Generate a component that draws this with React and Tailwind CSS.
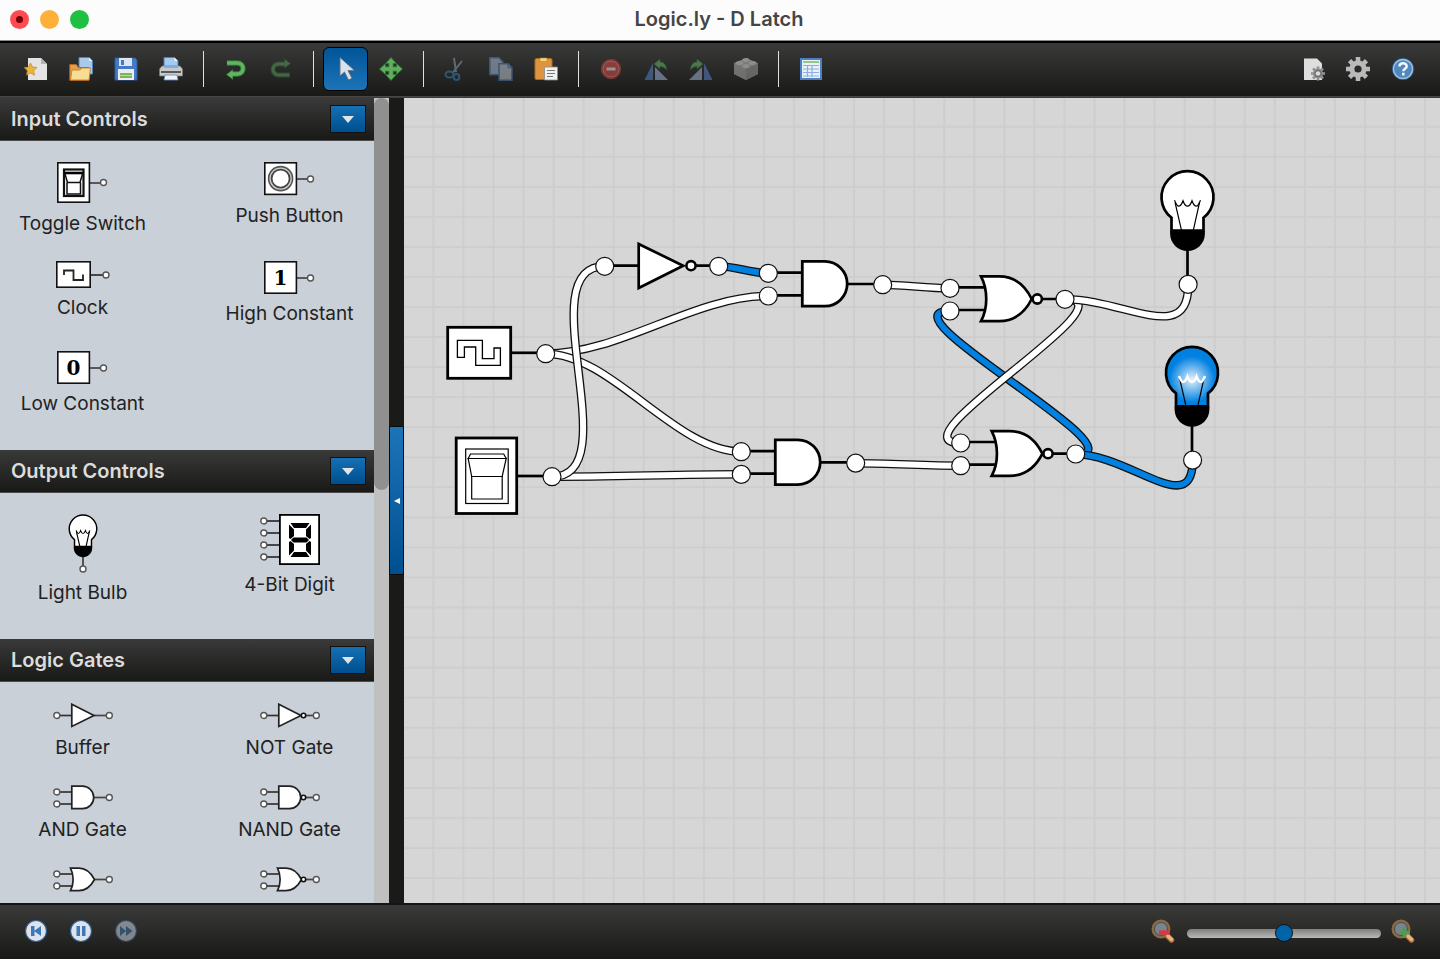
import React, { useState } from "react";

/* ---------- toolbar icons (24x24) ---------- */

function Icon({ children }) {
  return (
    <svg width="24" height="24" viewBox="0 0 24 24" fill="none" aria-hidden="true">
      {children}
    </svg>
  );
}

const NewIcon = () => (
  <Icon>
    <path d="M4 1h13l6 6v16H4z" fill="#e4e4e4" />
    <path d="M17 1v6h6z" fill="#b5b5b5" />
    <path d="M6.500 6l2 4 4.500.5-3.300 3.200.9 4.500-4.100-2.200-4.100 2.200.9-4.500L0 10.500l4.500-.5z" fill="#ecb53c" stroke="#b07a1c" strokeWidth=".6" />
  </Icon>
);

const OpenIcon = () => (
  <Icon>
    <path d="M10 .5h10l3.500 3.500v13H10z" fill="#a9c8ea" stroke="#4f83c0" />
    <path d="M20 .5V4h3.500z" fill="#e6f0fb" />
    <path d="M.8 7.500h6.500l2 3H20v12.800H.8z" fill="#dfa04a" stroke="#b5651d" />
    <path d="M3 13h8l2-2h8.500L20 23H1.500z" fill="#f7dc94" stroke="#c47a2a" strokeWidth=".8" />
  </Icon>
);

const SaveIcon = () => (
  <Icon>
    <path d="M1 1h20l2 2v20H1z" fill="#4579c4" stroke="#2d5ca6" />
    <path d="M5 1h13v8H5z" fill="#dbe5f3" />
    <path d="M7 3h3v5H7z" fill="#4579c4" />
    <path d="M4 12h16v11H4z" fill="#e9eef5" />
    <path d="M6 16h12v5H6z" fill="#7fb35b" />
    <path d="M6 18.500h12" stroke="#b7d99d" />
  </Icon>
);

const PrintIcon = () => (
  <Icon>
    <path d="M5 .5h10.500L19 4v8H5z" fill="#a6cbf0" stroke="#4b7fb8" />
    <path d="M15.500.5V4H19z" fill="#e9f3fd" />
    <path d="M3 9h18l2.500 3v7h-23v-7z" fill="#c9c9c9" stroke="#777" strokeWidth=".7" />
    <path d="M5 8h14v3H5z" fill="#7eaee0" />
    <path d="M2 15h20" stroke="#5a5a5a" strokeWidth="2" />
    <path d="M6 18h12l1 5H5z" fill="#eaf2fb" stroke="#5a8cc4" strokeWidth=".8" />
  </Icon>
);

const UndoIcon = () => (
  <Icon>
    <path d="M3 6h10.500a5.500 5.500 0 010 11H7" stroke="#2f7a38" strokeWidth="5.500" />
    <path d="M9 12v11l-7-5.500z" fill="#2f7a38" />
    <path d="M3 6h10.500a5.500 5.500 0 010 11H7" stroke="#62b463" strokeWidth="3.600" />
    <path d="M8.500 13.500v8L3 17.500z" fill="#62b463" />
  </Icon>
);

const RedoIcon = () => (
  <Icon>
    <path d="M21 18H9.500a5.500 5.500 0 010-11H16" stroke="#2f6a38" strokeWidth="5" />
    <path d="M15 1v11l7-5.500z" fill="#2f6a38" />
    <path d="M20 18H9.500a5.500 5.500 0 010-11H16" stroke="#5fa563" strokeWidth="3" />
    <path d="M16 3v7.500L21 6.500z" fill="#5fa563" />
  </Icon>
);

const PointerIcon = () => (
  <Icon>
    <path d="M6 .5v18.500l4.500-4 4 8 3.500-1.700-4-7.800h6.500z" fill="#d9e2ea" stroke="#5c7084" strokeWidth=".9" />
  </Icon>
);

const MoveIcon = () => (
  <Icon>
    <path
      d="M12 .5l5.500 6h-3.300v3.300h3.300V6.500l6 5.500-6 5.500v-3.300h-3.300v3.300h3.300L12 23.500l-5.500-6h3.300v-3.300H6.500v3.300L.5 12l6-5.500v3.300h3.300V6.500H6.500z"
      fill="#5fae5c"
      stroke="#2c7434"
      strokeWidth=".9"
    />
  </Icon>
);

const CutIcon = () => (
  <Icon>
    <path d="M10 1l2 14M18 4L8.500 16" stroke="#8fa9bd" strokeWidth="2" />
    <ellipse cx="5.500" cy="17.500" rx="4" ry="3" stroke="#2e8ac4" strokeWidth="2" />
    <ellipse cx="12.500" cy="20" rx="2.800" ry="3" stroke="#2e8ac4" strokeWidth="2" />
  </Icon>
);

const CopyIcon = () => (
  <Icon>
    <path d="M.8.8h9l4 4v13H.8z" fill="#b3c8de" stroke="#4a80c0" strokeWidth="1.500" />
    <path d="M10 6.800h9l4 4v12.500H10z" fill="#c8d4e0" stroke="#4a80c0" strokeWidth="1.500" />
    <path d="M19 6.800v4h4" stroke="#4a80c0" />
  </Icon>
);

const PasteIcon = () => (
  <Icon>
    <rect x="1" y="1.500" width="17" height="21" rx="1.500" fill="#dd9440" stroke="#b36a1e" />
    <path d="M6 1h7v3.500H6z" fill="#f5d57a" stroke="#b38a30" strokeWidth=".6" />
    <path d="M10.500 10H23.500v13h-13z" fill="#f1f1f1" stroke="#8c8c8c" strokeWidth=".8" />
    <path d="M13 13.500h8M13 16.500h8M13 19.500h6" stroke="#777" />
  </Icon>
);

const RemoveIcon = () => (
  <Icon>
    <circle cx="12" cy="12" r="9.500" fill="#e8504c" stroke="#c23c38" strokeWidth="1.500" />
    <circle cx="12" cy="12" r="8" stroke="#f09a97" />
    <path d="M7.500 12h9" stroke="#fff" strokeWidth="3" />
  </Icon>
);

const RotateLeftIcon = () => (
  <Icon>
    <path d="M9 6v17H.5z" fill="#5a8ad0" />
    <path d="M11 10v13h13z" fill="#a5bee5" />
    <path d="M10 7l6-5v3c4 0 6.500 3 6.500 8-2-3-4-3.500-6.500-3.500V12z" fill="#6fbe6c" stroke="#2c8434" strokeWidth=".6" />
  </Icon>
);

const RotateRightIcon = () => (
  <Icon>
    <path d="M15 6v17h8.500z" fill="#5a8ad0" />
    <path d="M13 10v13H0z" fill="#a5bee5" />
    <path d="M14 7L8 2v3c-4 0-6.500 3-6.500 8 2-3 4-3.500 6.500-3.500V12z" fill="#6fbe6c" stroke="#2c8434" strokeWidth=".6" />
  </Icon>
);

const BlockIcon = () => (
  <Icon>
    <path d="M0 6l12-5 12 5v11l-12 6-12-6z" fill="#c8c8c8" />
    <path d="M12 12l12-6v11l-12 6z" fill="#a6a6a6" />
    <path d="M0 6l12 6v11L0 17z" fill="#bababa" />
    <ellipse cx="12" cy="3" rx="3.500" ry="2" fill="#eee" />
    <ellipse cx="5.500" cy="6" rx="3.500" ry="2" fill="#eee" />
    <ellipse cx="18.500" cy="6" rx="3.500" ry="2" fill="#eee" />
    <ellipse cx="12" cy="9" rx="3.500" ry="2" fill="#eee" />
  </Icon>
);

const TableIcon = () => (
  <Icon>
    <rect x="2" y="2" width="20" height="20" fill="#e8f0fa" stroke="#4a80c4" strokeWidth="2" />
    <path d="M4 5h16" stroke="#85bb62" strokeWidth="1.600" />
    <path d="M4 8.500h16M4 12h16M4 15.500h16M4 19h16M8.500 8v12M13 8v12" stroke="#8db1de" strokeWidth="1.200" />
  </Icon>
);

function GearShape({ cx, cy, r, fill, hole }) {
  const teeth = [0, 45, 90, 135];
  return (
    <g transform={`translate(${cx} ${cy})`}>
      {teeth.map((a) => (
        <rect key={a} x={-r * 0.19} y={-r} width={r * 0.38} height={r * 2} fill={fill} transform={`rotate(${a})`} />
      ))}
      <circle r={r * 0.72} fill={fill} />
      <circle r={r * 0.3} fill={hole} />
    </g>
  );
}

const PageGearIcon = () => (
  <Icon>
    <path d="M3 1.500h13l5 5V23H3z" fill="#dedede" />
    <GearShape cx={17} cy={16.500} r={7} fill="#929292" hole="#ddd" />
    <circle cx="17" cy="16.500" r="3.300" stroke="#666" />
  </Icon>
);

const GearIcon = () => (
  <Icon>
    <GearShape cx={12} cy={12} r={12} fill="#b9b9b9" hole="#292929" />
  </Icon>
);

const HelpIcon = () => (
  <Icon>
    <circle cx="12" cy="12" r="9.700" fill="#4f87bf" stroke="#9fc0e0" strokeWidth="1.700" />
    <circle cx="12" cy="12" r="10.800" stroke="#2a5f96" strokeWidth=".7" />
    <path d="M8.500 9.500c0-4.300 7.200-4.200 7.200-.3 0 2.600-3.400 2.600-3.400 5M12.300 15.800v2.600" stroke="#f3f7fb" strokeWidth="2.500" />
  </Icon>
);

function PlayerIcon({ children }) {
  return (
    <Icon>
      <circle cx="12" cy="12" r="10.500" fill="#dce3ea" stroke="#30608f" strokeWidth="1.200" />
      {children}
    </Icon>
  );
}

const RestartIcon = () => (
  <PlayerIcon>
    <path d="M7 7h3.500v10H7zM17 7v10l-7-5z" fill="#3d78b8" />
  </PlayerIcon>
);

const PauseIcon = () => (
  <PlayerIcon>
    <path d="M7.500 7h3.500v10H7.500zM13 7h3.500v10H13z" fill="#3d78b8" />
  </PlayerIcon>
);

const ForwardIcon = () => (
  <PlayerIcon>
    <path d="M6 7l6 5-6 5zM12 7l6.500 5-6.500 5z" fill="#3d78b8" />
  </PlayerIcon>
);

function MagnifierIcon({ children }) {
  return (
    <Icon>
      <circle cx="10" cy="10" r="8.500" fill="#697078" stroke="#8f6a3a" strokeWidth="2" />
      <circle cx="10" cy="10" r="6.500" fill="#7b838b" stroke="#4a4f55" />
      <path d="M16.500 17l4 4" stroke="#a8683a" strokeWidth="5.500" strokeLinecap="round" />
      <path d="M17 17l3.500 3.500" stroke="#e6b583" strokeWidth="3.500" strokeLinecap="round" />
      {children}
    </Icon>
  );
}

const ZoomOutIcon = () => (
  <MagnifierIcon>
    <path d="M8 13.500h10.500" stroke="#e8303a" strokeWidth="4.200" />
  </MagnifierIcon>
);

const ZoomInIcon = () => (
  <MagnifierIcon>
    <path d="M8 13.500h11M13.500 8v11" stroke="#49a04c" strokeWidth="3.400" />
  </MagnifierIcon>
);

/* ---------- palette icons ---------- */

function MiniPin({ x, y }) {
  return <circle cx={x} cy={y} r="3" fill="#fff" stroke="#555" strokeWidth="1.400" />;
}

const ToggleMini = () => (
  <svg width="51" height="42">
    <path d="M33 21h12" stroke="#444" strokeWidth="1.700" />
    <rect x=".8" y=".8" width="31.600" height="39.400" fill="#fff" stroke="#111" strokeWidth="1.600" />
    <rect x="7" y="7.500" width="19.500" height="26.500" fill="#fff" stroke="#111" strokeWidth="2.200" />
    <path d="M7 11h19" stroke="#000" strokeWidth="2.600" />
    <path d="M8 12l2.500 8.500h12.500l2.500-8.500M10 20.500V32H23.500V20.500" stroke="#111" strokeWidth="1.500" fill="none" />
    <MiniPin x={46.500} y={20.500} />
  </svg>
);

const PushMini = () => (
  <svg width="51" height="34">
    <path d="M33 17h12" stroke="#444" strokeWidth="1.700" />
    <rect x=".8" y=".8" width="31.600" height="31.600" fill="#fff" stroke="#111" strokeWidth="1.600" />
    <circle cx="16.600" cy="16.600" r="12" fill="#ccc" stroke="#555" strokeWidth="1.600" />
    <circle cx="16.600" cy="16.600" r="9" fill="#fff" stroke="#444" strokeWidth="1.800" />
    <MiniPin x={46.500} y={17} />
  </svg>
);

const ClockMini = () => (
  <svg width="54" height="27">
    <path d="M35 14h12" stroke="#222" strokeWidth="1.600" />
    <rect x=".8" y=".8" width="33.400" height="25.400" fill="#fff" stroke="#111" strokeWidth="1.600" />
    <path d="M8 14V9.500h9.500V19h9.500v-5.500" fill="none" stroke="#222" strokeWidth="1.800" />
    <MiniPin x={50} y={14} />
  </svg>
);

function ConstantMini({ value }) {
  return (
    <svg width="51" height="33">
      <path d="M33 17h12" stroke="#444" strokeWidth="1.700" />
      <rect x=".8" y=".8" width="31.600" height="31.400" fill="#fff" stroke="#111" strokeWidth="1.600" />
      <text x="16.500" y="24" textAnchor="middle" className="font-['DejaVu_Serif',serif] text-[20px] font-bold">
        {value}
      </text>
      <MiniPin x={46.500} y={17} />
    </svg>
  );
}

function BulbShape({ lit, line = 1.2 }) {
  return (
    <g>
      <path
        d="M-16 34V21A26 26 0 1116 21V34z"
        fill={lit ? "url(#glow)" : "#fff"}
        stroke="#000"
        strokeWidth="2.700"
      />
      <path d="M-17.400 34.300H17.400V37C17.400 47 9 54.300 0 54.300S-17.400 47-17.400 37z" />
      <path d="M-12.400 6L-5.700 35M12 6L5.500 35" stroke="#000" strokeWidth={line} fill="none" />
      <path
        d="M-13 3.500Q-10.500 9.500-9 9.500Q-6.500 9.500-4.500 4Q-2.500 9.500 0 9.500Q2.500 9.500 4.500 4Q6.500 9.500 9 9.500Q10.500 9.500 13 3.500"
        fill="none"
        stroke={lit ? "#fff" : "#000"}
        strokeWidth={lit ? 2.5 : line}
      />
    </g>
  );
}

const BulbMini = () => (
  <svg width="30" height="59">
    <path d="M15 40v12" stroke="#333" strokeWidth="1.600" />
    <g transform="translate(15 14.500) scale(.53)">
      <BulbShape line={2.2} />
    </g>
    <MiniPin x={15} y={55} />
  </svg>
);

const DigitMini = () => (
  <svg width="60" height="51">
    {[7, 19, 31, 43].map((y) => (
      <g key={y}>
        <path d={`M6 ${y}h13`} stroke="#222" strokeWidth="1.600" />
        <MiniPin x={3.800} y={y} />
      </g>
    ))}
    <rect x="19.900" y=".9" width="39.200" height="49.200" fill="#fff" stroke="#000" strokeWidth="1.800" />
    <path
      d="M30.500 9h19l-3.500 5H34zM30.500 43h19L46 38H34zM33.500 23.500h13l2.500 2.500-2.500 2.500h-13L31 26zM29 10.500l5 5v6.500L30.500 25 29 24zM51 10.500l-5 5v6.500l3.500 3 1.500-1zM29 41.500l5-5V30L30.500 27 29 28zM51 41.500l-5-5V30l3.500-3 1.500 1z"
      fill="#000"
    />
  </svg>
);

const gateBodies = {
  buffer: "M18.800 1.200L41 12.500 18.800 23.500z",
  and: "M18.800 1.200H29.500A11.200 11.200 0 0129.500 23.600H18.800z",
  or: "M17.500 1.200H26C33 1.200 38 6 41.500 12.500C38 19 33 23.600 26 23.600H17.500C21 17 21 8 17.500 1.200z",
};

function GateMini({ shape, inverted }) {
  const inputs = shape === "buffer" ? [12.5] : [7, 19];
  return (
    <svg width="60" height="25">
      {inputs.map((y) => (
        <g key={y}>
          <path d={`M6 ${y}h14`} stroke="#333" strokeWidth="1.700" />
          <MiniPin x={3.800} y={y} />
        </g>
      ))}
      <path d="M41 12.500h13" stroke="#444" strokeWidth="1.700" />
      <path d={gateBodies[shape]} fill="#fff" stroke="#222" strokeWidth="1.700" />
      {inverted && <circle cx="43.500" cy="12.500" r="2.200" fill="#fff" stroke="#111" strokeWidth="1.600" />}
      <MiniPin x={56.300} y={12.500} />
    </svg>
  );
}

/* ---------- circuit ---------- */

const BLUE = "#0080e0";

// drawn in order, later wires lie on top
const wires = [
  { d: "M142 255.700C216 255.700 290 198 364.300 198" },
  { d: "M142 255.700C207 255.700 272 353.700 337.300 353.700" },
  { d: "M148 378.700C211 378.700 274 376.300 337.300 376.300" },
  { d: "M148 378.700C226 378.700 123 168.300 200.700 168.300" },
  { d: "M314.700 168.300C331 168.300 348 175.300 364.300 175.300", on: true },
  { d: "M478.700 186.700C501 186.700 523 190.300 546 190.300" },
  { d: "M451.700 365.300C487 365.300 522 367.700 556.700 367.700" },
  { d: "M671.700 356.300C744.700 356.300 473 213 546 213", on: true },
  { d: "M661 201.300C734 201.300 483.700 345 556.700 345" },
  { d: "M661 201.300C721 201.300 784.300 248 784.300 186.700" },
  { d: "M671.700 356.300C726 356.300 788.700 422 788.700 362.300", on: true },
];

function Wire({ d, on }) {
  return (
    <g fill="none">
      <path d={d} stroke="#111" strokeWidth="8.600" />
      <path d={d} stroke={on ? BLUE : "#fff"} strokeWidth="6" />
    </g>
  );
}

function Pin({ x, y }) {
  return <circle cx={x} cy={y} r="9" fill="#fff" stroke="#111" strokeWidth="1.200" />;
}

function ClockNode({ x, y }) {
  return (
    <g transform={`translate(${x} ${y})`}>
      <path d="M64 24.500h30" stroke="#000" strokeWidth="2.700" />
      <rect x="0" y="-1" width="63" height="51" fill="#fff" stroke="#000" strokeWidth="2.800" />
      <path
        d="M9.700 12H34.700V30.300H46.300V19.700H52.700V37H28V18.700H16.700V29H9.700z"
        fill="#fff"
        stroke="#000"
        strokeWidth="1.300"
      />
      <Pin x={98} y={25.400} />
    </g>
  );
}

function SwitchNode({ x, y }) {
  return (
    <g transform={`translate(${x} ${y})`}>
      <path d="M60 37.500h30" stroke="#000" strokeWidth="2.700" />
      <rect x="-.5" y="-.5" width="60.500" height="75.500" fill="#fff" stroke="#000" strokeWidth="2.800" />
      <g fill="#fff" stroke="#000" strokeWidth="1.200">
        <rect x="9" y="10.500" width="42.500" height="54.500" />
        <path d="M11.500 20L13.800 15.500H47L49.500 20z" />
        <path d="M11.500 20H49.500L45.500 38H15z" />
        <path d="M15 38H45.500V60.500H15z" />
      </g>
      <Pin x={95.300} y={38.200} />
    </g>
  );
}

function NotNode({ x, y }) {
  return (
    <g transform={`translate(${x} ${y})`}>
      <path d="M0-.6H34M91-.6H106" stroke="#000" strokeWidth="2.700" />
      <path d="M34-22.300L78.500-.6 34 21.700z" fill="#fff" stroke="#000" strokeWidth="2.700" />
      <circle cx="86.300" cy="-.6" r="4.600" fill="#fff" stroke="#000" strokeWidth="2.600" />
      <Pin x={0} y={0} />
      <Pin x={114} y={0} />
    </g>
  );
}

function AndNode({ x, y }) {
  return (
    <g transform={`translate(${x} ${y})`}>
      <path d="M0-.6H34M0 22H34M79 10.700H106" stroke="#000" strokeWidth="2.700" />
      <path d="M34-11.900H56.500A22.400 22.400 0 0156.500 32.900H34z" fill="#fff" stroke="#000" strokeWidth="2.800" />
      <Pin x={0} y={0} />
      <Pin x={0} y={22.700} />
      <Pin x={114.400} y={11.400} />
    </g>
  );
}

function NorNode({ x, y }) {
  return (
    <g transform={`translate(${x} ${y})`}>
      <path d="M0-1H38M0 21.700H38M92 10.700H107" stroke="#000" strokeWidth="2.700" />
      <path
        d="M31-11.900H49C64-11.900 75-3 81.700 10.700C75 24 64 32.800 49 32.800H31C38 20 38 1.500 31-11.900z"
        fill="#fff"
        stroke="#000"
        strokeWidth="2.700"
      />
      <circle cx="87.300" cy="10.700" r="4.600" fill="#fff" stroke="#000" strokeWidth="2.600" />
      <Pin x={0} y={0} />
      <Pin x={0} y={22.700} />
      <Pin x={115} y={11} />
    </g>
  );
}

function BulbNode({ x, y, lit }) {
  return (
    <g transform={`translate(${x} ${y})`}>
      <path d="M0 50V82" stroke="#000" strokeWidth="2.700" />
      <BulbShape lit={lit} />
      <Pin x={0.6} y={87.7} />
    </g>
  );
}

function Canvas() {
  return (
    <svg className="block h-full w-full bg-[#d6d6d6]" role="img" aria-label="D Latch circuit">
      <defs>
        <pattern id="grid" x="28.400" y="27.700" width="30.050" height="30.050" patternUnits="userSpaceOnUse">
          <path d="M0 1H30.050M1 0V30.050" stroke="#cdcdcd" strokeWidth="1.700" />
        </pattern>
        <radialGradient id="glow" gradientUnits="userSpaceOnUse" cx="0" cy="7" r="23">
          <stop offset="0" stopColor="#e4f1fc" />
          <stop offset="1" stopColor={BLUE} />
        </radialGradient>
      </defs>
      <rect width="100%" height="100%" fill="url(#grid)" />
      {wires.map((wire) => (
        <Wire key={wire.d} {...wire} />
      ))}
      <ClockNode x={43.700} y={230.300} />
      <SwitchNode x={52.700} y={340.500} />
      <NotNode x={200.700} y={168.300} />
      <AndNode x={364.300} y={175.300} />
      <AndNode x={337.300} y={353.700} />
      <NorNode x={546} y={190.300} />
      <NorNode x={556.700} y={345} />
      <BulbNode x={783.500} y={98.700} />
      <BulbNode x={788} y={274.400} lit />
    </svg>
  );
}

/* ---------- chrome ---------- */

const toolGroups = [
  [
    { label: "New", icon: NewIcon },
    { label: "Open", icon: OpenIcon },
    { label: "Save", icon: SaveIcon },
    { label: "Print", icon: PrintIcon },
  ],
  [
    { label: "Undo", icon: UndoIcon },
    { label: "Redo", icon: RedoIcon, disabled: true },
  ],
  [
    { label: "Select", icon: PointerIcon, mode: true },
    { label: "Pan", icon: MoveIcon, mode: true },
  ],
  [
    { label: "Cut", icon: CutIcon, disabled: true },
    { label: "Copy", icon: CopyIcon, disabled: true },
    { label: "Paste", icon: PasteIcon },
  ],
  [
    { label: "Delete", icon: RemoveIcon, disabled: true },
    { label: "Rotate Left", icon: RotateLeftIcon, disabled: true },
    { label: "Rotate Right", icon: RotateRightIcon, disabled: true },
    { label: "Create Integrated Circuit", icon: BlockIcon, disabled: true },
  ],
  [{ label: "Truth Table", icon: TableIcon }],
];

const rightTools = [
  { label: "Document Settings", icon: PageGearIcon },
  { label: "Settings", icon: GearIcon },
  { label: "Help", icon: HelpIcon },
];

const playerTools = [
  { label: "Restart", icon: RestartIcon },
  { label: "Pause", icon: PauseIcon },
  { label: "Step", icon: ForwardIcon, disabled: true },
];

const sections = [
  {
    title: "Input Controls",
    items: [
      { label: "Toggle Switch", icon: <ToggleMini /> },
      { label: "Push Button", icon: <PushMini /> },
      { label: "Clock", icon: <ClockMini /> },
      { label: "High Constant", icon: <ConstantMini value="1" /> },
      { label: "Low Constant", icon: <ConstantMini value="0" /> },
    ],
  },
  {
    title: "Output Controls",
    items: [
      { label: "Light Bulb", icon: <BulbMini /> },
      { label: "4-Bit Digit", icon: <DigitMini /> },
    ],
  },
  {
    title: "Logic Gates",
    items: [
      { label: "Buffer", icon: <GateMini shape="buffer" /> },
      { label: "NOT Gate", icon: <GateMini shape="buffer" inverted /> },
      { label: "AND Gate", icon: <GateMini shape="and" /> },
      { label: "NAND Gate", icon: <GateMini shape="and" inverted /> },
      { label: "OR Gate", icon: <GateMini shape="or" />, iconOnly: true },
      { label: "NOR Gate", icon: <GateMini shape="or" inverted />, iconOnly: true },
    ],
  },
];

function ToolButton({ tool, active, onClick }) {
  const ToolIcon = tool.icon;
  return (
    <button
      type="button"
      aria-label={tool.label}
      title={tool.label}
      disabled={tool.disabled}
      onClick={onClick}
      className={`flex h-11 w-[45px] items-center justify-center rounded-md border ${
        active ? "border-black bg-linear-to-b from-[#005596] to-[#1c74b8]" : "border-transparent"
      } ${tool.disabled ? "opacity-50" : ""}`}
    >
      <ToolIcon />
    </button>
  );
}

function TitleBar() {
  return (
    <header className="grid h-[41px] shrink-0 grid-cols-[1fr_auto_1fr] items-center border-b border-[#8a8a8a] bg-[#fcfcfc] pr-3 pb-0.5 pl-2.5">
      <div className="flex gap-[11px]">
        <button type="button" aria-label="Close" className="flex size-[19px] items-center justify-center rounded-full bg-[#ff4b50]">
          <span className="size-[7px] rounded-full bg-[#720005]" />
        </button>
        <button type="button" aria-label="Minimize" className="size-[19px] rounded-full bg-[#ffb03a]" />
        <button type="button" aria-label="Zoom window" className="size-[19px] rounded-full bg-[#1fc03f]" />
      </div>
      <h1 className="text-xl leading-6 font-semibold text-[#454545]">Logic.ly - D Latch</h1>
      <span />
    </header>
  );
}

function Toolbar() {
  const [mode, setMode] = useState("Select");
  return (
    <nav className="flex h-14 shrink-0 items-center justify-between border-t-2 border-b border-t-black border-b-[#4a4644] bg-linear-to-b from-[#3a3a3a] to-[#191917] pr-[15px] pb-0.5 pl-[13px]">
      <div className="flex items-center">
        {toolGroups.map((group, i) => (
          <React.Fragment key={group[0].label}>
            {i > 0 && <span className="mr-[9px] ml-2.5 h-9 w-px bg-[#e0e0e0]" />}
            {group.map((tool) => (
              <ToolButton
                key={tool.label}
                tool={tool}
                active={tool.mode && mode === tool.label}
                onClick={tool.mode ? () => setMode(tool.label) : undefined}
              />
            ))}
          </React.Fragment>
        ))}
      </div>
      <div className="flex items-center">
        {rightTools.map((tool) => (
          <ToolButton key={tool.label} tool={tool} />
        ))}
      </div>
    </nav>
  );
}

function Section({ title, items }) {
  const [open, setOpen] = useState(true);
  return (
    <section>
      <div className="flex h-[43px] items-center justify-between border-b border-[#4c4c4c] bg-linear-to-b from-[#3a3a3a] to-[#191917] pr-2 pl-[11px]">
        <h2 className="text-xl font-semibold text-[#dcdcdc]">{title}</h2>
        <button
          type="button"
          aria-label={`Toggle ${title}`}
          aria-expanded={open}
          onClick={() => setOpen(!open)}
          className="flex h-7 w-9 items-center justify-center border border-[#111] bg-linear-to-b from-[#1570b4] to-[#004f8f]"
        >
          <svg width="12" height="7" aria-hidden="true">
            <path d="M0 0h12L6 7z" fill="#e3e3e3" />
          </svg>
        </button>
      </div>
      {open && (
        <div className="grid grid-cols-2 gap-x-[42px] gap-y-[23px] pt-[21px] pr-0.5 pb-8">
          {items.map((item) => (
            <button
              key={item.label}
              type="button"
              aria-label={item.label}
              className="flex flex-col items-center justify-start gap-1.5 self-start text-[19px] leading-7 whitespace-nowrap text-[#222]"
            >
              {item.icon}
              {!item.iconOnly && item.label}
            </button>
          ))}
        </div>
      )}
    </section>
  );
}

function Sidebar() {
  return (
    <aside className="flex shrink-0">
      <div className="w-[374px] overflow-hidden bg-[#c9d0d7]">
        {sections.map((section) => (
          <Section key={section.title} {...section} />
        ))}
      </div>
      <div className="w-[15px] bg-[#c0c0c0]">
        <div className="h-[392px] rounded-full bg-[#909090]" />
      </div>
      <div className="flex w-[15px] items-center bg-[#1a1a18]">
        <button
          type="button"
          aria-label="Collapse sidebar"
          className="flex h-[149px] w-full items-center justify-center border border-[#0b0b0b] bg-linear-to-b from-[#1c74b8] to-[#005090]"
        >
          <svg width="6" height="6" aria-hidden="true">
            <path d="M6 0v6L0 3z" fill="#fff" />
          </svg>
        </button>
      </div>
    </aside>
  );
}

function StatusBar() {
  const [zoom, setZoom] = useState(50);
  return (
    <footer className="flex h-14 shrink-0 items-center justify-between border-t-2 border-[#151515] bg-linear-to-b from-[#3a3a3a] to-[#191917] pr-[25px] pb-0.5 pl-[13px]">
      <div className="flex">
        {playerTools.map((tool) => (
          <ToolButton key={tool.label} tool={tool} />
        ))}
      </div>
      <div className="flex items-center">
        <button type="button" aria-label="Zoom out" className="px-3">
          <ZoomOutIcon />
        </button>
        <input
          type="range"
          min="0"
          max="100"
          aria-label="Zoom"
          value={zoom}
          onChange={(e) => setZoom(Number(e.target.value))}
          className="mt-1 h-[9px] w-[194px] appearance-none rounded-full bg-linear-to-b from-[#808080] to-[#b8b8b8] [&::-webkit-slider-thumb]:size-[18px] [&::-webkit-slider-thumb]:appearance-none [&::-webkit-slider-thumb]:rounded-full [&::-webkit-slider-thumb]:border [&::-webkit-slider-thumb]:border-[#111] [&::-webkit-slider-thumb]:bg-[#0065a8]"
        />
        <button type="button" aria-label="Zoom in" className="pl-2.5">
          <ZoomInIcon />
        </button>
      </div>
    </footer>
  );
}

export default function App() {
  return (
    <div className="flex h-screen flex-col overflow-hidden font-['Inter',sans-serif]">
      <TitleBar />
      <Toolbar />
      <div className="flex min-h-0 flex-1 border-t border-[#3a3a3a]">
        <Sidebar />
        <main className="min-w-0 flex-1">
          <Canvas />
        </main>
      </div>
      <StatusBar />
    </div>
  );
}
